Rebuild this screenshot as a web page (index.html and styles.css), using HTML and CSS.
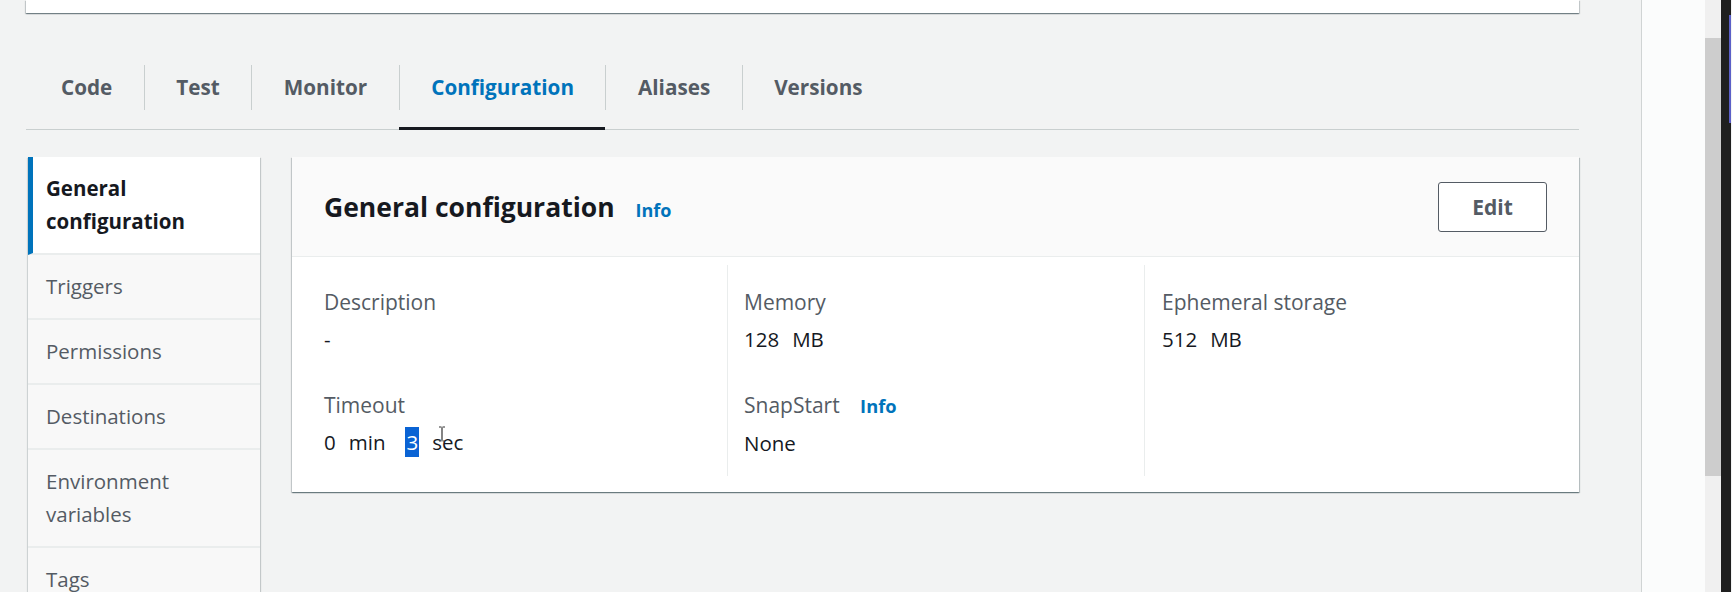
FILE: index.html
```html
<!DOCTYPE html>
<html lang="en">
<head>
<meta charset="utf-8">
<title>Configuration</title>
<link rel="stylesheet" href="styles.css">
</head>
<body>
<div class="page">
  <main class="main">
    <div class="topcard"></div>
    <nav class="tabs">
      <div class="tab first">Code</div>
      <div class="tab">Test</div>
      <div class="tab">Monitor</div>
      <div class="tab active">Configuration</div>
      <div class="tab">Aliases</div>
      <div class="tab">Versions</div>
    </nav>
    <div class="content">
      <ul class="sidenav">
        <li class="nav-item current">General configuration</li>
        <li class="nav-item">Triggers</li>
        <li class="nav-item">Permissions</li>
        <li class="nav-item">Destinations</li>
        <li class="nav-item">Environment variables</li>
        <li class="nav-item">Tags</li>
      </ul>
      <section class="card">
        <header class="card-header">
          <h2 class="card-title">General configuration <span class="info">Info</span></h2>
          <button class="btn">Edit</button>
        </header>
        <div class="card-body">
          <div class="col">
            <div class="label">Description</div>
            <div class="value">-</div>
            <div class="label">Timeout</div>
            <div class="value timeout">0<span class="gap"></span>min<span class="gap"></span><span class="sel">3</span><span class="gap"></span>sec<svg class="ibeam" width="8" height="16" viewBox="0 0 8 16"><path d="M1 1h2.5M4.5 1H7M4 1.5v13M1 15h2.5M4.5 15H7" stroke="#333" stroke-width="1.2" fill="none"/></svg></div>
          </div>
          <div class="col bordered">
            <div class="label">Memory</div>
            <div class="value">128<span class="gap"></span>MB</div>
            <div class="label">SnapStart <span class="info small">Info</span></div>
            <div class="value">None</div>
          </div>
          <div class="col bordered wide">
            <div class="label">Ephemeral storage</div>
            <div class="value">512<span class="gap"></span>MB</div>
          </div>
        </div>
      </section>
    </div>
  </main>
  <aside class="sidepanel"></aside>
  <div class="scrollbar"><div class="thumb"></div></div>
  <div class="dark"><div class="accent"></div></div>
</div>
</body>
</html>
```
FILE: styles.css
```css
* { box-sizing: border-box; }
html, body { margin: 0; padding: 0; }
body {
  background: #f2f3f3;
  font-family: "Open Sans", "Noto Sans", sans-serif;
  color: #16191f;
  width: 1732px;
  height: 592px;
  overflow: hidden;
}
.page { display: flex; height: 592px; }
.main {
  width: 1642px;
  flex: none;
  padding: 0 62px 0 26px;
  border-right: 1px solid #d0d4d4;
}
.topcard {
  height: 13px;
  background: #fff;
  box-shadow: 0 1px 1px 0 rgba(0,28,36,.35), 1px 1px 1px 0 rgba(0,28,36,.15), -1px 1px 1px 0 rgba(0,28,36,.15);
}
.tabs {
  display: flex;
  margin-top: 52px;
  padding-left: 3px;
  border-bottom: 1px solid #c9cfcf;
}
.tab {
  padding: 0 31.5px;
  height: 45px;
  line-height: 45px;
  font-size: 20.7px;
  font-weight: 700;
  color: #545b64;
  border-left: 1px solid #c9cfcf;
  position: relative;
  margin-bottom: 19px;
}
.tab.first { border-left: none; padding-left: 32px; }
.tab.active { color: #0073bb; }
.tab.active::after {
  content: "";
  position: absolute;
  left: -1px; right: 0;
  bottom: -20px;
  height: 3px;
  background: #16191f;
}
.content {
  display: flex;
  align-items: flex-start;
  margin-top: 27px;
  padding-left: 2px;
  gap: 32px;
}
.sidenav {
  list-style: none;
  margin: 0;
  padding: 0;
  width: 232px;
  flex: none;
  background: #f8f8f8;
  box-shadow: 0 1px 1px 0 rgba(0,28,36,.3), 1px 1px 1px 0 rgba(0,28,36,.15), -1px 1px 1px 0 rgba(0,28,36,.1);
}
.nav-item {
  padding: 15px 16px 15px 18px;
  line-height: 33px;
  font-size: 20.5px;
  color: #545b64;
  border-bottom: 2px solid #eaeded;
}
.nav-item.current {
  background: #fff;
  color: #16191f;
  font-weight: 700;
  border-left: 5px solid #0073bb;
  padding-left: 13px;
  padding-right: 30px;
}
.card {
  flex: 1;
  background: #fff;
  box-shadow: 0 1px 1px 0 rgba(0,28,36,.35), 1px 1px 1px 0 rgba(0,28,36,.2), -1px 1px 1px 0 rgba(0,28,36,.15);
}
.card-header {
  height: 100px;
  background: #fafafa;
  border-bottom: 1px solid #eaeded;
  display: flex;
  align-items: center;
  justify-content: space-between;
  padding: 0 32px;
}
.card-title {
  margin: 0;
  font-size: 26.5px;
  font-weight: 700;
  color: #16191f;
}
.info {
  font-size: 18px;
  color: #0073bb;
  font-weight: 700;
  margin-left: 14px;
}
.info.small { margin-left: 15px; font-size: 18.3px; }
.btn {
  width: 109px;
  height: 50px;
  border: 1px solid #545b64;
  border-radius: 3px;
  background: #fff;
  font-family: inherit;
  font-size: 21px;
  font-weight: 700;
  color: #545b64;
}
.card-body {
  display: grid;
  grid-template-columns: 403px 417px 1fr;
  padding: 8px 32px 16px;
}
.col { padding: 22px 0 18px; }
.col.bordered { border-left: 1px solid #eaeded; padding-left: 16px; }
.col.wide { padding-left: 17px; }
.label {
  font-size: 21px;
  line-height: 30px;
  color: #545b64;
  margin-bottom: 7px;
}
.value {
  font-size: 20.5px;
  line-height: 30px;
  color: #16191f;
  margin-bottom: 36px;
}
.value:last-child { margin-bottom: 0; }
.gap { display: inline-block; width: 13px; }
.timeout { position: relative; }
.sel {
  background: #0a63d4;
  color: #fff;
  display: inline-block;
  padding: 0 1px;
  margin-left: 7px;
}
.ibeam { position: absolute; left: 114px; top: -1px; }
.sidepanel {
  width: 63px;
  flex: none;
  background: #fbfcfc;
}
.scrollbar {
  width: 16px;
  flex: none;
  background: #f0f0f0;
  padding-top: 38px;
}
.thumb { height: 438px; background: #cdcdcd; }
.dark {
  width: 10px;
  flex: none;
  background: #1f1f1f;
  padding-top: 15px;
}
.accent { margin-left: 8px; width: 2px; height: 108px; background: #5b5fc7; }
```
